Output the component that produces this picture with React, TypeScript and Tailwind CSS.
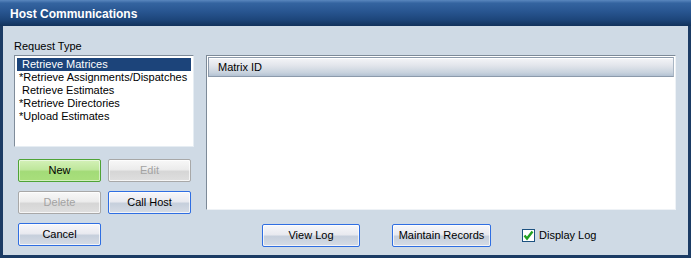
import React from "react";

const font = { fontFamily: '"Liberation Sans", Arial, sans-serif' };

const normalBtn =
  "h-[23px] border border-[#2f6ee2] rounded-[2px] bg-[linear-gradient(to_bottom,#f7f7fa_0%,#e9eaf0_45%,#c6cfdc_55%,#d6dce5_100%)] shadow-[inset_0_0_0_1px_rgba(255,255,255,0.7)] text-[11px] text-black flex items-center justify-center";
const disabledBtn =
  "h-[23px] border border-[#a8a8a8] rounded-[2px] bg-[linear-gradient(to_bottom,#f8f8f8_0%,#ececec_45%,#d6d6d6_55%,#dfdfdf_100%)] shadow-[inset_0_0_0_1px_rgba(255,255,255,0.7)] text-[11px] text-[#a3a3a3] flex items-center justify-center";
const greenBtn =
  "h-[23px] border border-[#4fa336] rounded-[2px] bg-[linear-gradient(to_bottom,#d4f1b8_0%,#bfe79c_45%,#a3db78_55%,#a9df7c_100%)] shadow-[inset_0_0_0_1px_rgba(255,255,255,0.5)] text-[11px] text-black flex items-center justify-center";

const items = [
  " Retrieve Matrices",
  "*Retrieve Assignments/Dispatches",
  " Retrieve Estimates",
  "*Retrieve Directories",
  "*Upload Estimates",
];

export default function App() {
  return (
    <div
      className="w-[691px] h-[258px] bg-[#1b3b64] flex flex-col overflow-hidden"
      style={font}
    >
      <div className="h-[26px] shrink-0 bg-[linear-gradient(to_bottom,#5a87be_0%,#3464a0_12%,#285590_45%,#1d467b_75%,#12325b_100%)] flex items-center pl-[10px] pt-[1px]">
        <span className="text-white font-bold text-[12px]">Host Communications</span>
      </div>
      <div className="flex-1 mx-[3px] mb-[3px] bg-[#cfdae5] flex pt-[14px] pl-[11px]">
        {/* left column */}
        <div className="w-[180px] flex flex-col">
          <div className="h-[13px] leading-[13px] text-[11px] text-black mb-[2px]">Request Type</div>
          <div className="h-[92px] bg-white border-t border-l border-[#7f8c9a] border-r border-b border-r-[#e6edf3] border-b-[#e6edf3] pt-[2px] px-[2px]">
            {items.map((t, i) => (
              <div
                key={i}
                className={
                  "h-[13px] leading-[13px] text-[11px] whitespace-pre pl-[2px] " +
                  (i === 0 ? "bg-[#1c447a] text-white" : "text-black")
                }
              >
                {t}
              </div>
            ))}
          </div>
          <div className="mt-[12px] pl-[4px] grid grid-cols-[83px_83px] gap-x-[7px] gap-y-[9px]">
            <div className={greenBtn}>New</div>
            <div className={disabledBtn}>Edit</div>
            <div className={disabledBtn}>Delete</div>
            <div className={normalBtn}>Call Host</div>
            <div className={normalBtn}>Cancel</div>
          </div>
        </div>
        {/* right column */}
        <div className="ml-[12px] w-[470px] flex flex-col pt-[15px]">
          <div className="h-[155px] bg-white border-t border-l border-[#7d8a98] border-r border-b border-r-[#eef2f6] border-b-[#eef2f6] p-[1px]">
            <div className="h-[20px] border border-[#8c9aab] border-r-[#a9b6c4] bg-[linear-gradient(to_bottom,#f4f5f8_0%,#e3e6ec_40%,#c9d3de_80%,#b3c2d3_100%)] shadow-[inset_0_1px_0_#ffffff] flex items-center pl-[9px] text-[11px] text-black">
              Matrix ID
            </div>
          </div>
          <div className="mt-[14px] flex items-center">
            <div className={normalBtn + " ml-[56px] w-[98px]"}>View Log</div>
            <div className={normalBtn + " ml-[32px] w-[99px]"}>Maintain Records</div>
            <div className="ml-[31px] flex items-center">
              <div className="w-[13px] h-[13px] border border-[#1c5180] bg-white flex items-center justify-center">
                <svg width="11" height="11" viewBox="0 0 11 11">
                  <path d="M1.5 5.5 L4 8.5 L9.5 1.5" stroke="#22a022" strokeWidth="2.4" fill="none" />
                </svg>
              </div>
              <span className="ml-[4px] text-[11px] text-black">Display Log</span>
            </div>
          </div>
        </div>
      </div>
    </div>
  );
}
